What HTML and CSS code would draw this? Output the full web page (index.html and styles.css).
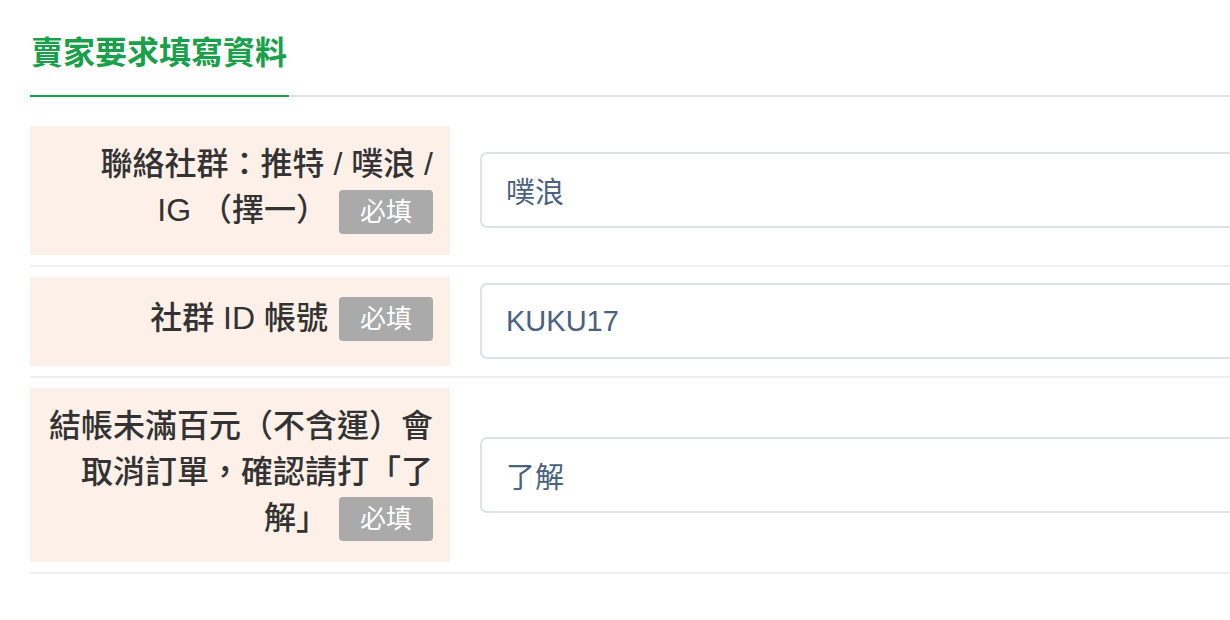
FILE: index.html
```html
<!DOCTYPE html>
<html lang="zh-Hant">
<head>
<meta charset="UTF-8">
<title>賣家要求填寫資料</title>
<link rel="stylesheet" href="styles.css">
</head>
<body>
	<div class="page">
		<div class="tabs">
			<span class="tab active">賣家要求填寫資料</span>
		</div>

		<form class="seller-form" name="SellerForm">
			<div class="row">
				<label class="row-label" for="social">
					<span>聯絡社群：推特 / 噗浪 / <span class="nobr">IG （擇一）<span class="badge">必填</span></span></span>
				</label>
				<div class="row-field">
					<input class="text-input" type="text" id="social" value="噗浪">
				</div>
			</div>

			<div class="row">
				<label class="row-label" for="account">
					<span><span class="nobr">社群 ID 帳號<span class="badge">必填</span></span></span>
				</label>
				<div class="row-field">
					<input class="text-input" type="text" id="account" value="KUKU17">
				</div>
			</div>

			<div class="row">
				<label class="row-label" for="confirm">
					<span>結帳未滿百元（不含運）會取消訂單，確認請打「了<span class="nobr">解」<span class="badge">必填</span></span></span>
				</label>
				<div class="row-field">
					<input class="text-input" type="text" id="confirm" value="了解">
				</div>
			</div>
		</form>
	</div>
</body>
</html>
```

FILE: styles.css
```css
html, body {
	margin: 0;
	padding: 0;
	background: #fff;
	overflow: hidden;
}

body {
	font-family: "Liberation Sans", "Noto Sans CJK TC", sans-serif;
	color: #333;
}

.page {
	width: 1260px;
	padding-left: 30px;
}

/* section tab */

.tabs {
	padding-top: 31px;
	border-bottom: 2px solid #e2e2e2;
}

.tab {
	display: inline-block;
	padding: 0 2px 20px 1px;
	margin-bottom: -2px;
	font-size: 32px;
	line-height: 44px;
	font-weight: 700;
	color: #1a9f4a;
	border-bottom: 2px solid #1a9f4a;
}

/* form rows */

.seller-form {
	margin: 19px 0 0;
}

.row {
	display: flex;
	align-items: center;
	gap: 30px;
	padding: 10px 0;
	border-bottom: 2px solid #efefef;
}

.row-label {
	box-sizing: border-box;
	flex: 0 0 420px;
	min-height: 89px;
	display: flex;
	align-items: center;
	justify-content: flex-end;
	padding: 15px 17px 21px 16px;
	background: #fdf0e9;
	text-align: right;
	font-size: 32px;
	line-height: 46px;
	font-weight: 500;
	color: #333;
}

.nobr {
	white-space: nowrap;
}

.badge {
	display: inline-block;
	vertical-align: middle;
	margin: -2px 0 0 11px;
	padding: 0 21px;
	height: 44px;
	line-height: 44px;
	font-size: 26px;
	font-weight: 400;
	color: #fff;
	background: #aaa;
	border-radius: 4px;
}

.row-field {
	flex: 1;
}

.text-input {
	box-sizing: border-box;
	display: block;
	width: 100%;
	height: 76px;
	padding: 0 24px;
	border: 2px solid #dee2e7;
	border-radius: 7px;
	background: #fff;
	font-family: "Liberation Sans", "Noto Sans CJK TC", sans-serif;
	font-size: 29px;
	color: #4a6181;
	outline: none;
}
```
